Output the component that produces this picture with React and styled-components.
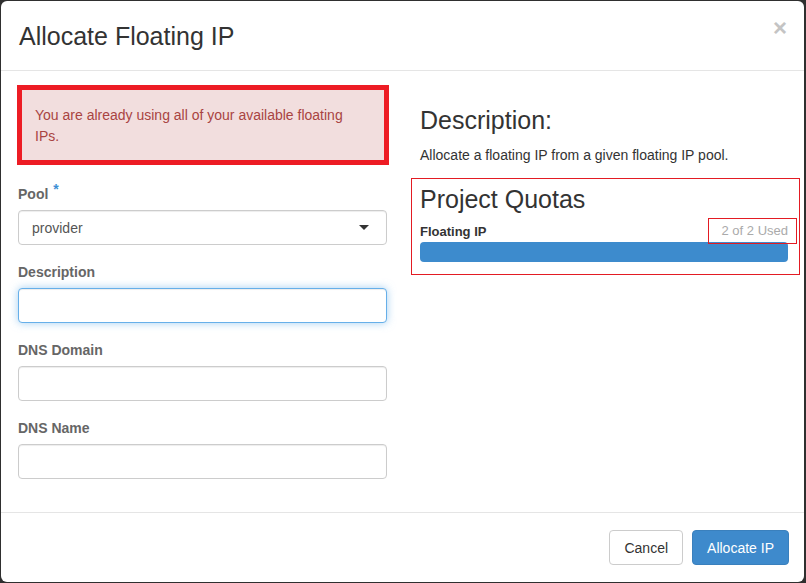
import styled, { createGlobalStyle } from "styled-components"

const GlobalStyle = createGlobalStyle`
  html, body {
    margin: 0;
    padding: 0;
    background: #2f2f2f;
    font-family: "Liberation Sans", Arial, sans-serif;
    font-size: 14px;
    color: #333;
  }
  * { box-sizing: border-box; }
`

function App() {
  return (
    <>
      <GlobalStyle />
      <Modal>
        <Header>
          <Title>Allocate Floating IP</Title>
          <Close>×</Close>
        </Header>
        <Body>
          <Column>
            <Alert>You are already using all of your available floating IPs.</Alert>
            <Field>
              <Label>
                Pool <Required>*</Required>
              </Label>
              <Select>
                provider
                <Caret />
              </Select>
            </Field>
            <Field>
              <Label>Description</Label>
              <Input focused />
            </Field>
            <Field>
              <Label>DNS Domain</Label>
              <Input />
            </Field>
            <Field>
              <Label>DNS Name</Label>
              <Input />
            </Field>
          </Column>
          <Column>
            <Heading>Description:</Heading>
            <Text>Allocate a floating IP from a given floating IP pool.</Text>
            <Quotas>
              <QuotaTitle>Project Quotas</QuotaTitle>
              <QuotaRow>
                <QuotaName>Floating IP</QuotaName>
                <QuotaUsed>2 of 2 Used</QuotaUsed>
              </QuotaRow>
              <Bar>
                <Fill style={{ width: `${(2 / 2) * 100}%` }} />
              </Bar>
            </Quotas>
          </Column>
        </Body>
        <Footer>
          <Button>Cancel</Button>
          <Button primary>Allocate IP</Button>
        </Footer>
      </Modal>
    </>
  )
}
export default App

const Modal = styled.div`
  margin: 1px 2px 1px 1px;
  height: 581px;
  background: #fff;
  border-radius: 6px;
  display: flex;
  flex-direction: column;
  overflow: hidden;
`
const Header = styled.div`
  height: 70px;
  border-bottom: 1px solid #e5e5e5;
  padding: 22px 17px 0 18px;
  display: flex;
  justify-content: space-between;
  align-items: flex-start;
`
const Title = styled.h4`
  margin: 0;
  font-size: 25px;
  font-weight: 400;
  line-height: 27px;
  color: #333;
`
const Close = styled.span`
  font-size: 24px;
  font-weight: 700;
  line-height: 1;
  color: #c4c4c4;
  margin-top: -7px;
  cursor: pointer;
`
const Body = styled.div`
  flex: 1;
  padding: 14px 15px 0 17px;
  display: grid;
  grid-template-columns: 369px 368px;
  column-gap: 33px;
  align-items: start;
`
const Column = styled.div`
  display: flex;
  flex-direction: column;
`
const Alert = styled.div`
  border: 5px solid #ed1c24;
  margin: 0 -2px 19px -1px;
  background: #f2dede;
  color: #a94442;
  padding: 15px 24px 13px 13px;
  line-height: 21px;
  font-size: 14px;
`
const Field = styled.div`
  display: flex;
  flex-direction: column;
  margin-bottom: 17px;
`
const Label = styled.label`
  font-weight: 700;
  font-size: 14px;
  line-height: 20px;
  height: 20px;
  color: #666;
  margin-bottom: 6px;
`
const Required = styled.span`
  color: #3d8fd4;
  font-size: 14px;
  line-height: 0;
  vertical-align: 5px;
  margin-left: 1px;
`
const Select = styled.div`
  height: 35px;
  border: 1px solid #ccc;
  border-radius: 4px;
  padding: 0 17px 0 13px;
  display: flex;
  align-items: center;
  justify-content: space-between;
  color: #555;
  font-size: 14px;
  box-shadow: inset 0 1px 1px rgba(0, 0, 0, 0.075);
`
const Caret = styled.span`
  width: 0;
  height: 0;
  border-left: 5px solid transparent;
  border-right: 5px solid transparent;
  border-top: 5px solid #333;
`
const Input = styled.input`
  height: 35px;
  border: 1px solid ${(p) => (p.focused ? "#66afe9" : "#ccc")};
  border-radius: 4px;
  padding: 0 12px;
  font-family: inherit;
  font-size: 14px;
  outline: none;
  box-shadow: ${(p) =>
    p.focused
      ? "inset 0 1px 1px rgba(0,0,0,.075), 0 0 8px rgba(102,175,233,.6)"
      : "inset 0 1px 1px rgba(0,0,0,.075)"};
`
const Heading = styled.h3`
  margin: 21px 0 11px;
  font-size: 25px;
  font-weight: 400;
  line-height: 28px;
  color: #333;
`
const Text = styled.p`
  margin: 0 0 13px;
  line-height: 20px;
  font-size: 14px;
  color: #333;
`
const Quotas = styled.div`
  border: 1px solid #e31b23;
  margin: 0 -12px 0 -9px;
  padding: 6px 11px 12px 8px;
`
const QuotaTitle = styled.h3`
  margin: 0 0 9px;
  font-size: 25px;
  font-weight: 400;
  line-height: 28px;
  color: #333;
`
const QuotaRow = styled.div`
  height: 18px;
  display: flex;
  justify-content: space-between;
  align-items: center;
  margin-bottom: 2px;
`
const QuotaName = styled.span`
  font-weight: 700;
  font-size: 13px;
  color: #333;
`
const QuotaUsed = styled.span`
  font-size: 13px;
  color: #aaa;
  border: 1px solid #e31b23;
  padding: 3px 8px 4px 13px;
  margin: -4px -9px -4px 0;
  line-height: 17px;
  position: relative;
  z-index: 1;
`
const Bar = styled.div`
  height: 20px;
  border-radius: 4px;
  background: #f5f5f5;
  overflow: hidden;
`
const Fill = styled.div`
  height: 100%;
  background: #3d8bcd;
`
const Footer = styled.div`
  height: 70px;
  border-top: 1px solid #e5e5e5;
  padding: 17px 15px 0;
  display: flex;
  justify-content: flex-end;
  align-items: flex-start;
  gap: 9px;
`
const Button = styled.button`
  height: 35px;
  padding: 0 14px;
  border-radius: 4px;
  font-family: inherit;
  font-size: 14px;
  border: 1px solid ${(p) => (p.primary ? "#3a80bd" : "#ccc")};
  background: ${(p) => (p.primary ? "#3e8acc" : "#fff")};
  color: ${(p) => (p.primary ? "#fff" : "#333")};
  cursor: pointer;
`
